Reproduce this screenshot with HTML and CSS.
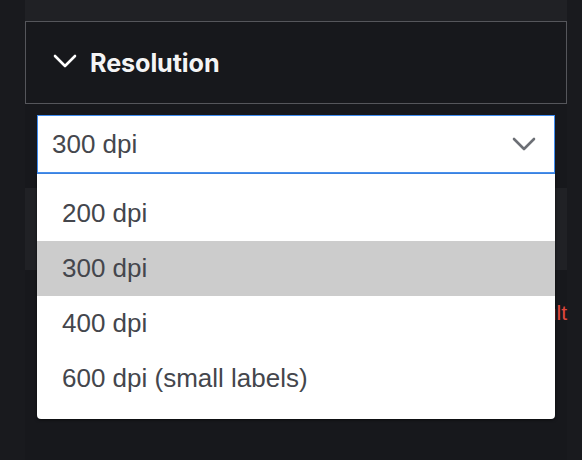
FILE: index.html
```html
<!DOCTYPE html>
<html>
<head>
<meta charset="utf-8">
<link rel="stylesheet" href="styles.css">
</head>
<body>
<div class="page">
  <div class="top-panel"></div>
  <div class="section-head">
    <svg class="chev" width="24" height="14" viewBox="0 0 24 14"><path d="M2 2 L12 12 L22 2" fill="none" stroke="#ffffff" stroke-width="2.6" stroke-linecap="round" stroke-linejoin="round"/></svg>
    <span class="section-title">Resolution</span>
  </div>
  <div class="select-wrap">
    <div class="select">
      <span class="select-value">300 dpi</span>
      <svg class="select-chev" width="24" height="14" viewBox="0 0 24 14"><path d="M2 2 L12 12 L22 2" fill="none" stroke="#6c6f75" stroke-width="2.6" stroke-linecap="round" stroke-linejoin="round"/></svg>
    </div>
    <ul class="menu">
      <li class="item">200 dpi</li>
      <li class="item active">300 dpi</li>
      <li class="item">400 dpi</li>
      <li class="item">600 dpi (small labels)</li>
    </ul>
  </div>
  <div class="under-panel"></div>
  <div class="reset-row"><span class="reset">Reset to default</span></div>
</div>
</body>
</html>
```
FILE: styles.css
```css
html, body {
  margin: 0;
  padding: 0;
  background: #191a1e;
  height: 100%;
}
.page {
  margin-left: 25px;
  width: 542px;
  background: #17181c;
  min-height: 460px;
}
.top-panel {
  height: 21px;
  background: #202125;
}
.section-head {
  box-sizing: border-box;
  height: 83px;
  border: 1px solid #55565b;
  display: flex;
  align-items: center;
  padding-left: 27px;
  gap: 13px;
}
.chev {
  display: block;
  margin-top: -3px;
}
.section-title {
  font-family: "Inter", "Liberation Sans", sans-serif;
  font-weight: 700;
  font-size: 25.2px;
  color: #f4f4f5;
  letter-spacing: -0.1px;
}
.select-wrap {
  position: relative;
  margin: 11px 12px 0 12px;
}
.select {
  box-sizing: border-box;
  height: 59px;
  background: #fff;
  border: 1px solid #3f8cf0;
  box-shadow: inset 0 -1px 0 #4a93f2;
  display: flex;
  align-items: center;
  justify-content: space-between;
  padding: 0 18px 0 14px;
}
.select-value {
  font-family: "Liberation Sans", Arial, sans-serif;
  font-size: 26px;
  color: #45474d;
}
.select-chev {
  display: block;
  margin-top: -2px;
}
.menu {
  position: absolute;
  top: 59px;
  left: 0;
  right: 0;
  margin: 0;
  padding: 12px 0 13px 0;
  list-style: none;
  background: #fff;
  border-radius: 0 0 4px 4px;
  box-shadow: 0 1px 3px rgba(0, 0, 0, 0.55);
  z-index: 2;
}
.item {
  height: 55px;
  display: flex;
  align-items: center;
  padding-left: 25px;
  font-family: "Liberation Sans", Arial, sans-serif;
  font-size: 26px;
  color: #44464c;
}
.item.active {
  background: #cccccc;
}
.under-panel {
  margin-top: 14px;
  height: 82px;
  background: #202125;
}
.reset-row {
  display: flex;
  justify-content: flex-end;
  margin-top: 31px;
}
.reset {
  font-family: "Liberation Sans", Arial, sans-serif;
  font-size: 21px;
  color: #e0473d;
}
```
